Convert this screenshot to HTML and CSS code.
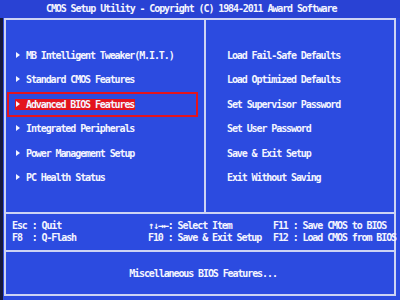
FILE: index.html
```html
<!DOCTYPE html>
<html lang="en">
<head>
    <meta charset="UTF-8">
    <meta name="viewport" content="width=device-width, initial-scale=1.0">
    <title>CMOS Setup Utility</title>
    <link rel="stylesheet" href="styles.css">
</head>
<body>
    <div class="screen">
        <div class="title">CMOS Setup Utility - Copyright (C) 1984-2011 Award Software</div>
        <div class="frame">
            <div class="menu">
                <ul class="column left">
                    <li class="item"><span class="label"><span class="arrow"></span>MB Intelligent Tweaker(M.I.T.)</span></li>
                    <li class="item"><span class="label"><span class="arrow"></span>Standard CMOS Features</span></li>
                    <li class="item selected"><span class="label"><span class="arrow"></span>Advanced BIOS Features</span></li>
                    <li class="item"><span class="label"><span class="arrow"></span>Integrated Peripherals</span></li>
                    <li class="item"><span class="label"><span class="arrow"></span>Power Management Setup</span></li>
                    <li class="item"><span class="label"><span class="arrow"></span>PC Health Status</span></li>
                </ul>
                <ul class="column right">
                    <li class="item">Load Fail-Safe Defaults</li>
                    <li class="item">Load Optimized Defaults</li>
                    <li class="item">Set Supervisor Password</li>
                    <li class="item">Set User Password</li>
                    <li class="item">Save &amp; Exit Setup</li>
                    <li class="item">Exit Without Saving</li>
                </ul>
            </div>
            <div class="help">
                <span>Esc : Quit</span>
                <span>↑↓→←: Select Item</span>
                <span>F11 : Save CMOS to BIOS</span>
                <span>F8  : Q-Flash</span>
                <span>F10 : Save &amp; Exit Setup</span>
                <span>F12 : Load CMOS from BIOS</span>
            </div>
            <div class="status">Miscellaneous BIOS Features...</div>
        </div>
    </div>
</body>
</html>
```

FILE: styles.css
```css
body {
    margin: 0;
    background-color: #101226;
    font-family: "DejaVu Sans Mono", "Liberation Mono", monospace;
    font-weight: bold;
    font-size: 10px;
    letter-spacing: -1.1px;
    color: #f4f5ff;
}
.screen {
    width: 400px;
    height: 300px;
    display: flex;
    flex-direction: column;
    background-color: #2c4be0;
    box-shadow: inset 3px 0 0 #16193c;
}
.title {
    height: 18px;
    line-height: 18px;
    padding-left: 46px;
    white-space: pre;
    background-color: #2942d4;
}
.frame {
    display: flex;
    flex-direction: column;
    margin: 0 4px 4px 4px;
    height: 278px;
    border: 2px solid #cdd3f4;
}
.menu {
    display: grid;
    grid-template-columns: 200px 1fr;
    height: 192px;
}
.column {
    list-style: none;
    margin: 0;
    padding: 24px 0 0;
}
.column.left {
    border-right: 2px solid #cdd3f4;
}
.item {
    height: 24.4px;
    line-height: 20.4px;
    box-sizing: border-box;
    white-space: pre;
}
.left .item {
    margin: 0 6px 0 1px;
    padding-left: 7px;
    border: 2px solid transparent;
}
.left .item.selected {
    height: 25px;
    margin-top: -0.3px;
    margin-bottom: -0.3px;
    border-color: #e3141e;
    line-height: 21px;
}
.right .item {
    padding-left: 21px;
    line-height: 24.4px;
}
.label {
    display: inline-block;
    line-height: 11px;
    padding: 0 1px;
    margin-left: -1px;
}
.selected .label {
    background-color: #e3141e;
}
.arrow {
    display: inline-block;
    width: 0;
    height: 0;
    margin: 0 6px 1px 0;
    border-left: 4px solid #f4f5ff;
    border-top: 3px solid transparent;
    border-bottom: 3px solid transparent;
}
.help {
    display: grid;
    grid-template-columns: 136px 125px 1fr;
    grid-auto-rows: 12px;
    align-content: center;
    height: 36px;
    padding-left: 6px;
    border-top: 2px solid #cdd3f4;
    border-bottom: 2px solid #cdd3f4;
    white-space: pre;
    line-height: 12px;
}
.status {
    flex: 1;
    display: flex;
    justify-content: center;
    align-items: center;
    padding: 0 0 0 6px;
}
```
